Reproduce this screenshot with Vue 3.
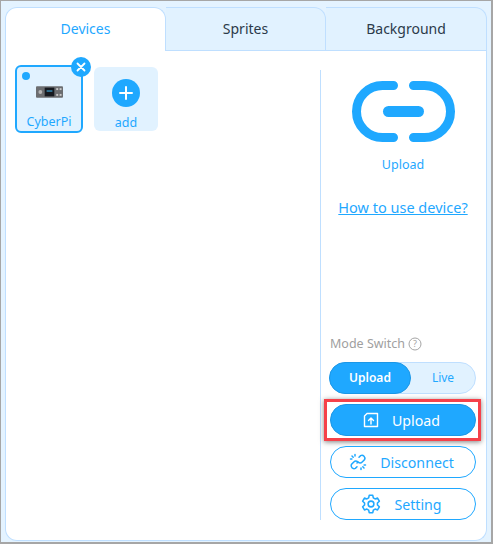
<script setup>
const cards = [{ id: 'cyberpi', name: 'CyberPi' }]
</script>

<template>
  <div class="window">
    <div class="frame">
      <div class="tabs">
        <div class="tab active">Devices</div>
        <div class="tab">Sprites</div>
        <div class="tab last">Background</div>
      </div>
      <div class="panel">
        <div class="left">
          <div v-for="c in cards" :key="c.id" class="device selected">
            <span class="dot"></span>
            <span class="close">
              <svg width="10" height="10" viewBox="0 0 10 10"><path d="M1.5 1.5l7 7M8.5 1.5l-7 7" stroke="#fff" stroke-width="1.8" stroke-linecap="round"/></svg>
            </span>
            <svg class="thumb" width="27" height="12" viewBox="0 0 28 12">
              <rect x="0" y="0" width="28" height="12" rx="1" fill="#6b6d70"/>
              <circle cx="4.5" cy="6" r="2" fill="#b5b5b5"/>
              <rect x="9" y="1.5" width="10" height="9" fill="#15191f"/>
              <rect x="11" y="4" width="6" height="2" fill="#2f6f8f"/>
              <rect x="21" y="2" width="2" height="2" fill="#c9c9c9"/>
              <rect x="24.5" y="2" width="2" height="2" fill="#c9c9c9"/>
              <rect x="21" y="8" width="2" height="2" fill="#c9c9c9"/>
              <rect x="24.5" y="8" width="2" height="2" fill="#c9c9c9"/>
            </svg>
            <span class="label">{{ c.name }}</span>
          </div>
          <div class="device add">
            <span class="plus">
              <svg width="14" height="14" viewBox="0 0 14 14"><path d="M7 1v12M1 7h12" stroke="#fff" stroke-width="2" stroke-linecap="round"/></svg>
            </span>
            <span class="label">add</span>
          </div>
        </div>
        <div class="right">
          <div class="top">
            <svg class="link" width="103" height="61" viewBox="0 0 103 61">
              <path d="M41.5 4.5H30.5a26 26 0 0 0 0 52H41.5M61.5 4.5H72.5a26 26 0 0 1 0 52H61.5" fill="none" stroke="#1fa8ff" stroke-width="9" stroke-linecap="round"/>
              <path d="M36.5 30.5H66.5" fill="none" stroke="#1fa8ff" stroke-width="11" stroke-linecap="round"/>
            </svg>
            <div class="mode-name">Upload</div>
            <a class="help">How to use device?</a>
          </div>
          <div class="bottom">
            <div class="mode-title">
              Mode Switch
              <svg width="14" height="14" viewBox="0 0 14 14"><circle cx="7" cy="7" r="6" fill="none" stroke="#a5a5a5" stroke-width="1"/><text x="7" y="10.2" text-anchor="middle" font-size="9" fill="#a5a5a5" font-family="Noto Sans, sans-serif">?</text></svg>
            </div>
            <div class="switch">
              <span class="opt on">Upload</span>
              <span class="opt">Live</span>
            </div>
            <div class="mark">
              <button class="btn solid">
                <svg width="16" height="16" viewBox="0 0 16 16" fill="none" stroke="#fff" stroke-width="1.4" stroke-linecap="round" stroke-linejoin="round"><path d="M4 1.5H14.5V14.5H1.5V4Z"/><path d="M8 12V6M5.5 8.5L8 6l2.5 2.5"/></svg>
                <span>Upload</span>
              </button>
            </div>
            <button class="btn">
              <svg width="18" height="18" viewBox="0 0 18 18" fill="none" stroke="#1fa8ff" stroke-width="1.5" stroke-linecap="round"><path d="M10 4.2l1.6-1.6a3 3 0 0 1 4 4l-2.4 2.4a3 3 0 0 1-3.8.4"/><path d="M8 13.8l-1.6 1.6a3 3 0 0 1-4-4l2.4-2.4a3 3 0 0 1 3.8-.4"/><path d="M9 9l-1 1M3 3l1.2 1.2M1.5 6h1.4M6 1.5v1.4M15 15l-1.2-1.2M16.5 12h-1.4M12 16.5v-1.4"/></svg>
              <span>Disconnect</span>
            </button>
            <button class="btn">
              <svg width="20" height="20" viewBox="0 0 18 18" fill="none" stroke="#1fa8ff" stroke-width="1.4" stroke-linejoin="round"><path d="M7.4 1.2h3.2l.5 2.3 1.6.9 2.2-.7 1.6 2.8-1.7 1.6v1.8l1.7 1.6-1.6 2.8-2.2-.7-1.6.9-.5 2.3H7.4l-.5-2.3-1.6-.9-2.2.7-1.6-2.8 1.7-1.6V8.1L1.5 6.5l1.6-2.8 2.2.7 1.6-.9z"/><circle cx="9" cy="9" r="2.6"/></svg>
              <span>Setting</span>
            </button>
          </div>
        </div>
      </div>
    </div>
  </div>
</template>

<style>
html, body { margin: 0; padding: 0; background: #e1f2ff; }
</style>

<style scoped>
.window {
  box-sizing: border-box;
  width: 493px;
  height: 544px;
  background: #e4f3ff;
  border: solid #a6a6a6;
  border-width: 1px 2px 2px 1px;
  padding: 6px 4px 0 4px;
  font-family: "Noto Sans", sans-serif;
  color: #1fa8ff;
}
.frame {
  height: 534px;
  box-sizing: border-box;
  display: flex;
  flex-direction: column;
}
.tabs { display: flex; height: 44px; flex: none; }
.tab {
  box-sizing: border-box;
  width: 160px;
  height: 44px;
  background: #e1f2ff;
  border: 1px solid #bfdfff;
  border-left: none;
  border-radius: 0 12px 0 0;
  text-align: center;
  line-height: 42px;
  font-size: 14px;
  color: #2b3a4a;
}
.tab.active {
  width: 161px;
  background: #fff;
  color: #1fa8ff;
  border-left: 1px solid #bfdfff;
  border-bottom: none;
  border-radius: 12px 12px 0 0;
}
.tab.last { width: 161px; }
.panel {
  flex: 1;
  box-sizing: border-box;
  background: #fff;
  border: 1px solid #bfdfff;
  border-top: none;
  border-radius: 0 0 12px 12px;
  display: flex;
  padding: 14px 10px 20px 9px;
  min-height: 0;
}
.left {
  flex: none;
  width: 305px;
  display: flex;
  align-items: flex-start;
  gap: 11px;
}
.device {
  box-sizing: border-box;
  position: relative;
  width: 64px;
  height: 64px;
  margin-top: 2px;
  border-radius: 6px;
  background: #e1f2ff;
  display: flex;
  flex-direction: column;
  align-items: center;
}
.device.selected {
  width: 68px;
  height: 68px;
  margin-top: 0;
  border: 2px solid #1fa8ff;
}
.dot {
  position: absolute;
  left: 5px;
  top: 5px;
  width: 8px;
  height: 8px;
  border-radius: 50%;
  background: #1fa8ff;
}
.close {
  position: absolute;
  right: -10px;
  top: -10px;
  width: 20px;
  height: 20px;
  border-radius: 50%;
  background: #1fa8ff;
  display: flex;
  align-items: center;
  justify-content: center;
}
.thumb { margin-top: 19px; }
.selected .label { margin-top: 16px; }
.label { font-size: 12.5px; line-height: 16px; color: #1fa8ff; }
.plus {
  width: 28px;
  height: 28px;
  margin-top: 12px;
  border-radius: 50%;
  background: #1fa8ff;
  display: flex;
  align-items: center;
  justify-content: center;
}
.add .label { margin-top: 8px; }
.right {
  flex: 1;
  box-sizing: border-box;
  border-left: 1px solid #bfdfff;
  padding: 11px 0 0 9px;
  display: flex;
  flex-direction: column;
  justify-content: space-between;
  margin-top: 5px;
}
.top { width: 146px; display: flex; flex-direction: column; align-items: center; }
.link { display: block; flex: none; }
.mode-name { font-size: 12.5px; line-height: 16px; margin-top: 15px; }
.help { font-size: 14.5px; line-height: 20px; margin-top: 24px; text-decoration: underline; color: #1fa8ff; white-space: nowrap; }
.bottom { display: flex; flex-direction: column; }
.mode-title {
  display: flex;
  align-items: center;
  gap: 3px;
  font-size: 12.5px;
  line-height: 16px;
  color: #a0a0a0;
  margin-bottom: 10px;
}
.switch {
  box-sizing: border-box;
  display: flex;
  width: 147px;
  height: 32px;
  margin-left: -1px;
  border-radius: 16px;
  border: 1px solid #bfdfff;
  background: #e1f2ff;
  font-size: 12px;
}
.opt { flex: 1; text-align: center; line-height: 30px; font-weight: 400; }
.opt.on {
  flex: none;
  box-sizing: border-box;
  width: 82px;
  margin: -1px 0 -1px -1px;
  line-height: 30px;
  border: 1px solid #1c97e6;
  border-radius: 16px;
  background: #1fa8ff;
  color: #fff;
  font-weight: 600;
}
.btn {
  box-sizing: border-box;
  width: 146px;
  height: 32px;
  flex: none;
  margin-top: 10px;
  border: 1px solid #1fa8ff;
  border-radius: 16px;
  background: #fff;
  color: #1fa8ff;
  font-family: inherit;
  font-size: 14.2px;
  display: flex;
  align-items: center;
  justify-content: center;
  gap: 13px;
  padding: 0 3px 0 0;
}
.btn.solid { background: #1fa8ff; border-color: #1c97e6; color: #fff; margin-top: 0; }
.mark {
  box-sizing: border-box;
  width: 157px;
  height: 42px;
  margin: 5px 0 -5px -6px;
  padding: 2px 0 0 3px;
  border: 3px solid #f5414a;
  box-shadow: 0 1px 5px rgba(0,0,0,.5);
}
</style>
